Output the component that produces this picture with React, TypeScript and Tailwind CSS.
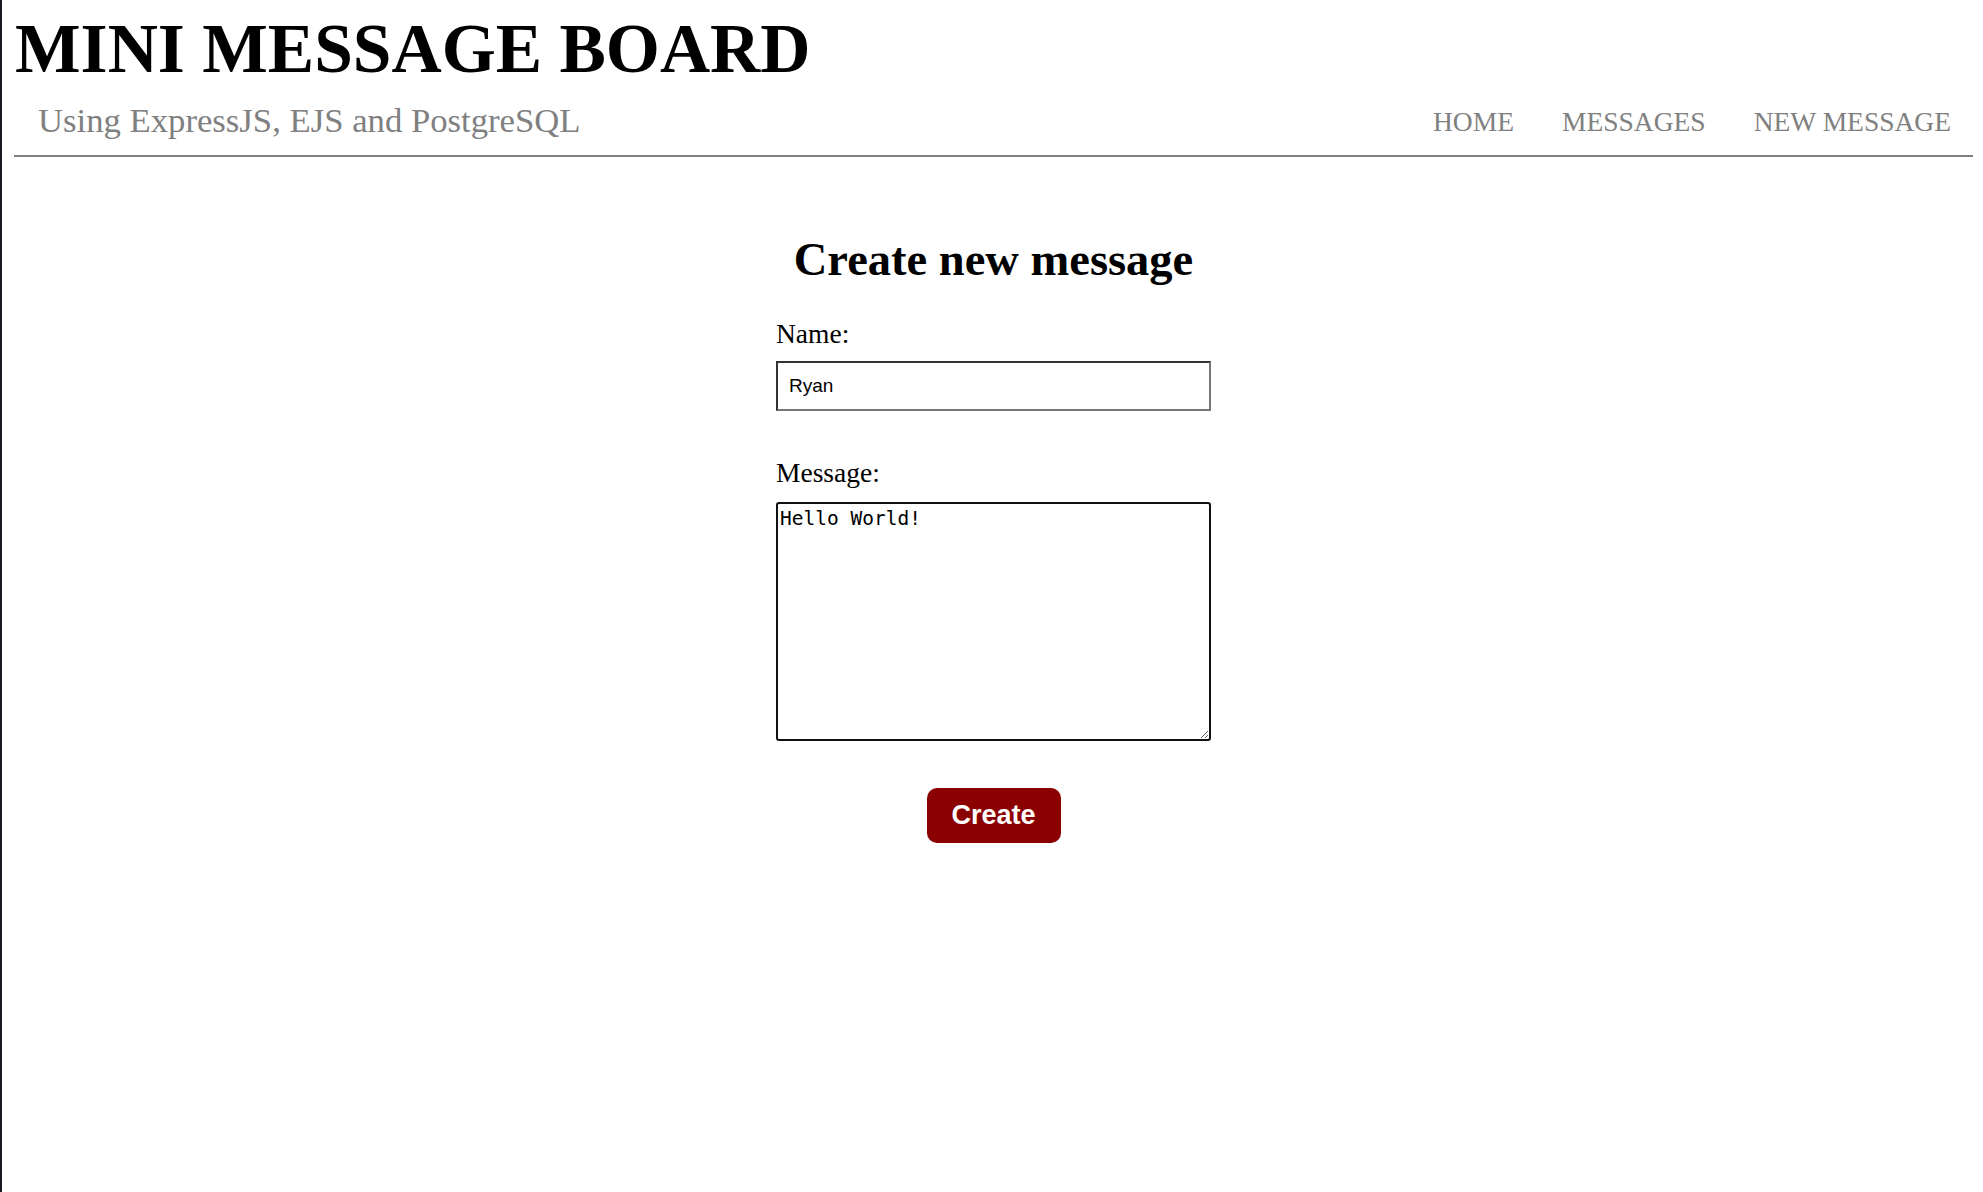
import { useState } from 'react'

const serif = "font-['Liberation_Serif','Times_New_Roman',serif]"

const Header = () => {
  return (
    <header className="ml-[12px] mr-[10px] border-b-2 border-[#808080]">
      <h1 className={`${serif} pt-[14px] pl-[1px] text-[69.5px] leading-[70px] font-bold text-black`}>
        MINI MESSAGE BOARD
      </h1>
      <div className="mt-[20px] flex items-end justify-between pb-[17px]">
        <p className={`${serif} pl-[24px] text-[34.7px] leading-[34px] text-[#808080]`}>
          Using ExpressJS, EJS and PostgreSQL
        </p>
        <nav className={`${serif} mb-[3px] flex gap-[48px] pr-[22px] text-[27.5px] leading-[27px] text-[#808080]`}>
          <a href="#">HOME</a>
          <a href="#">MESSAGES</a>
          <a href="#">NEW MESSAGE</a>
        </nav>
      </div>
    </header>
  )
}

export default function App() {
  const [name, setName] = useState('Ryan')
  const [message, setMessage] = useState('Hello World!')

  return (
    <div className="min-h-screen border-l-2 border-[#1c1b22] bg-white">
      <Header />
      <main className="ml-[12px] mr-[10px] flex justify-center">
        <form className="flex w-[435px] flex-col" onSubmit={e => e.preventDefault()}>
          <h2 className={`${serif} mt-[80px] text-center text-[46.5px] leading-[46px] font-bold text-black`}>
            Create new message
          </h2>
          <label htmlFor="name" className={`${serif} mt-[37px] text-[27.5px] leading-[27px] text-black`}>
            Name:
          </label>
          <input
            id="name"
            type="text"
            value={name}
            onChange={e => setName(e.target.value)}
            className="mt-[14px] h-[50px] w-full border-2 border-t-[#333] border-l-[#333] border-r-[#777] border-b-[#777] pl-[11px] font-['Liberation_Sans',Arial,sans-serif] text-[19px] text-black outline-none"
          />
          <label htmlFor="message" className={`${serif} mt-[48px] text-[27.5px] leading-[27px] text-black`}>
            Message:
          </label>
          <textarea
            id="message"
            value={message}
            onChange={e => setMessage(e.target.value)}
            className="mt-[16px] h-[239px] w-full resize rounded-[3px] border-2 border-[#111] p-[2px] font-['DejaVu_Sans_Mono',monospace] text-[19.5px] leading-[25px] text-black outline-none"
          />
          <div className="mt-[47px] flex justify-center">
            <button
              type="submit"
              className="h-[55px] w-[134px] rounded-[10px] bg-[#8b0000] font-['Liberation_Sans',Arial,sans-serif] text-[27px] font-bold text-white"
            >
              Create
            </button>
          </div>
        </form>
      </main>
    </div>
  )
}
